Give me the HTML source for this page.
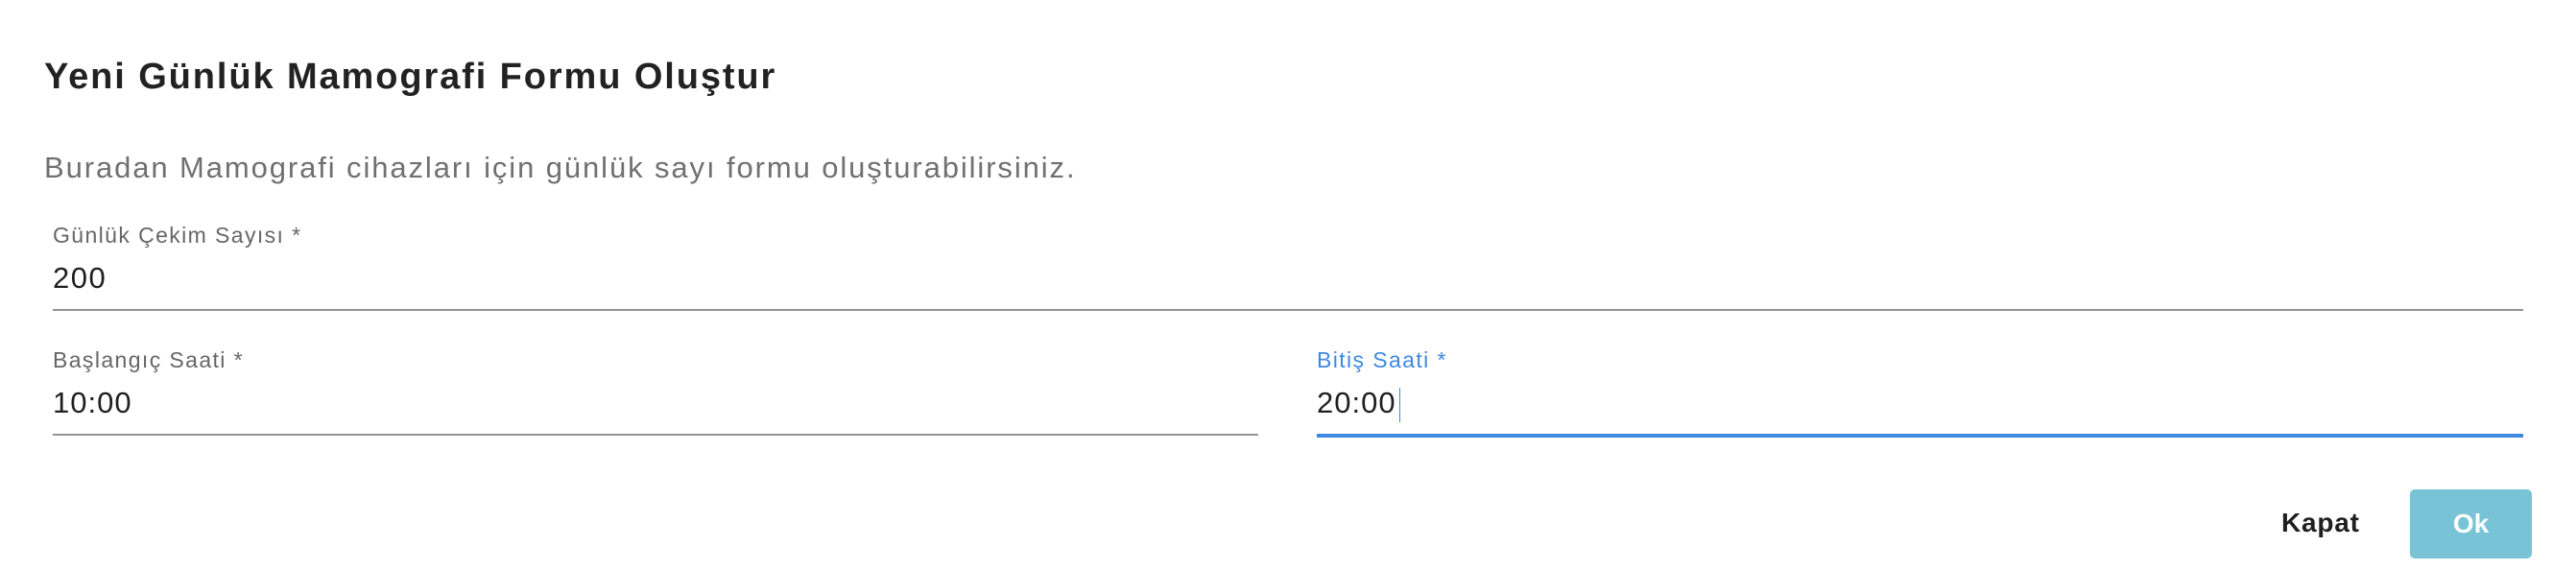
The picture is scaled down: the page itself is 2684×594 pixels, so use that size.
<!DOCTYPE html>
<html><head><meta charset="utf-8"><style>
html,body{margin:0;padding:0;background:#fff;width:2684px;height:594px;overflow:hidden;font-family:"Liberation Sans",sans-serif;}
.a{position:absolute;white-space:nowrap;}
</style></head><body>
<div class="a" style="left:46px;top:59px;font-size:38px;color:#222;font-weight:bold;letter-spacing:1.9px;">Yeni Günlük Mamografi Formu Oluştur</div>
<div class="a" style="left:46px;top:157px;font-size:31px;color:#707070;letter-spacing:1.9px;">Buradan Mamografi cihazları için günlük sayı formu oluşturabilirsiniz.</div>

<div class="a" style="left:55px;top:232px;font-size:23px;color:#666;letter-spacing:1.4px;">Günlük Çekim Sayısı *</div>
<div class="a" style="left:55px;top:272px;font-size:31px;color:#1f1f1f;letter-spacing:1.5px;">200</div>
<div class="a" style="left:55px;top:322px;width:2574px;height:2px;background:#949494;"></div>

<div class="a" style="left:55px;top:362px;font-size:23px;color:#666;letter-spacing:1.4px;">Başlangıç Saati *</div>
<div class="a" style="left:55px;top:402px;font-size:31px;color:#1f1f1f;letter-spacing:1px;">10:00</div>
<div class="a" style="left:55px;top:452px;width:1256px;height:2px;background:#949494;"></div>

<div class="a" style="left:1372px;top:362px;font-size:23px;color:#3f88e0;letter-spacing:1.4px;">Bitiş Saati *</div>
<div class="a" style="left:1372px;top:402px;font-size:31px;color:#1f1f1f;letter-spacing:1px;">20:00</div>
<div class="a" style="left:1458px;top:404px;width:1px;height:36px;background:#3f88e0;"></div>
<div class="a" style="left:1372px;top:452px;width:1257px;height:4px;background:#3f88e0;"></div>

<div class="a" style="left:2377px;top:529px;font-size:28px;color:#1f1f1f;font-weight:bold;letter-spacing:0.8px;">Kapat</div>
<div class="a" style="left:2511px;top:510px;width:127px;height:72px;background:#78c3d6;border-radius:5px;color:#fff;font-size:28px;font-weight:bold;text-align:center;line-height:72px;">Ok</div>
</body></html>
